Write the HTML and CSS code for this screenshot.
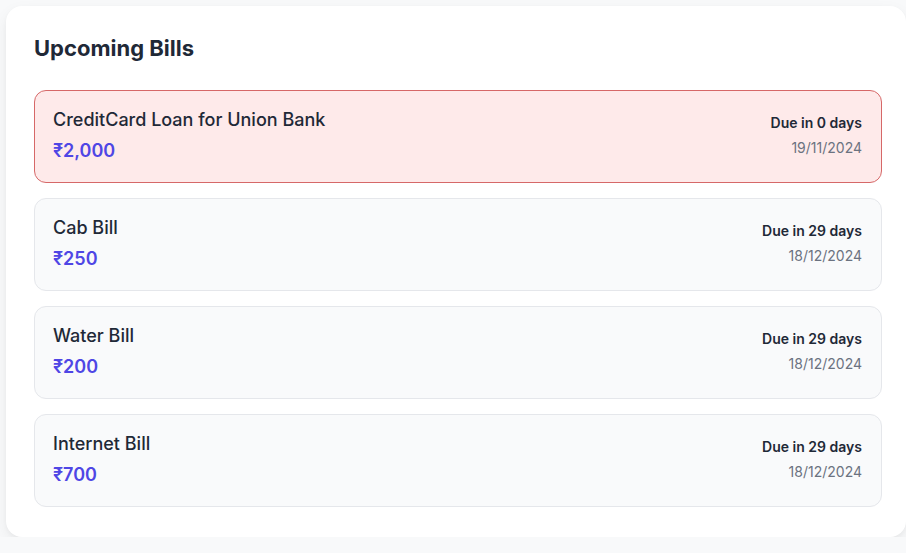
FILE: index.html
```html
<!DOCTYPE html>
<html>
<head>
<meta charset="utf-8">
<link rel="stylesheet" href="styles.css">
</head>
<body>
<div class="page">
  <section class="card">
    <h2 class="title">Upcoming Bills</h2>
    <div class="list">
      <div class="bill overdue">
        <div class="left">
          <div class="name">CreditCard Loan for Union Bank</div>
          <div class="amount">₹2,000</div>
        </div>
        <div class="right">
          <div class="due">Due in 0 days</div>
          <div class="date">19/11/2024</div>
        </div>
      </div>
      <div class="bill">
        <div class="left">
          <div class="name">Cab Bill</div>
          <div class="amount">₹250</div>
        </div>
        <div class="right">
          <div class="due">Due in 29 days</div>
          <div class="date">18/12/2024</div>
        </div>
      </div>
      <div class="bill">
        <div class="left">
          <div class="name">Water Bill</div>
          <div class="amount">₹200</div>
        </div>
        <div class="right">
          <div class="due">Due in 29 days</div>
          <div class="date">18/12/2024</div>
        </div>
      </div>
      <div class="bill">
        <div class="left">
          <div class="name">Internet Bill</div>
          <div class="amount">₹700</div>
        </div>
        <div class="right">
          <div class="due">Due in 29 days</div>
          <div class="date">18/12/2024</div>
        </div>
      </div>
    </div>
  </section>
</div>
</body>
</html>
```
FILE: styles.css
```css
html, body {
  margin: 0;
  padding: 0;
  background: #f8f9fa;
  overflow: hidden;
}
body {
  font-family: Inter, "Noto Sans", sans-serif;
  color: #1f2937;
}
.page {
  padding: 6px 0 0 6px;
}
.card {
  width: 900px;
  box-sizing: border-box;
  background: #ffffff;
  border-radius: 16px;
  box-shadow: 0 6px 16px rgba(0, 0, 0, 0.06), 0 2px 4px rgba(0, 0, 0, 0.03);
  padding: 28px 24px 30px 28px;
}
.title {
  margin: 0 0 28px 0;
  font-size: 22px;
  line-height: 28px;
  font-weight: 700;
  color: #1f2937;
}
.list {
  display: flex;
  flex-direction: column;
  gap: 15px;
}
.bill {
  display: flex;
  justify-content: space-between;
  align-items: center;
  background: #f9fafb;
  border: 1px solid #e5e7eb;
  border-radius: 12px;
  padding: 15px 19px 17px 18px;
}
.bill.overdue {
  background: #feeaea;
  border-color: #d66868;
}
.name {
  font-size: 18px;
  line-height: 28px;
  font-weight: 500;
  color: #1f2937;
}
.amount {
  margin-top: 3px;
  font-size: 18px;
  line-height: 28px;
  font-weight: 600;
  color: #4f46e5;
}
.right {
  text-align: right;
}
.due {
  font-size: 14px;
  line-height: 20px;
  font-weight: 600;
  color: #1f2937;
}
.date {
  margin-top: 5px;
  font-size: 14px;
  line-height: 20px;
  color: #6b7280;
}
```
